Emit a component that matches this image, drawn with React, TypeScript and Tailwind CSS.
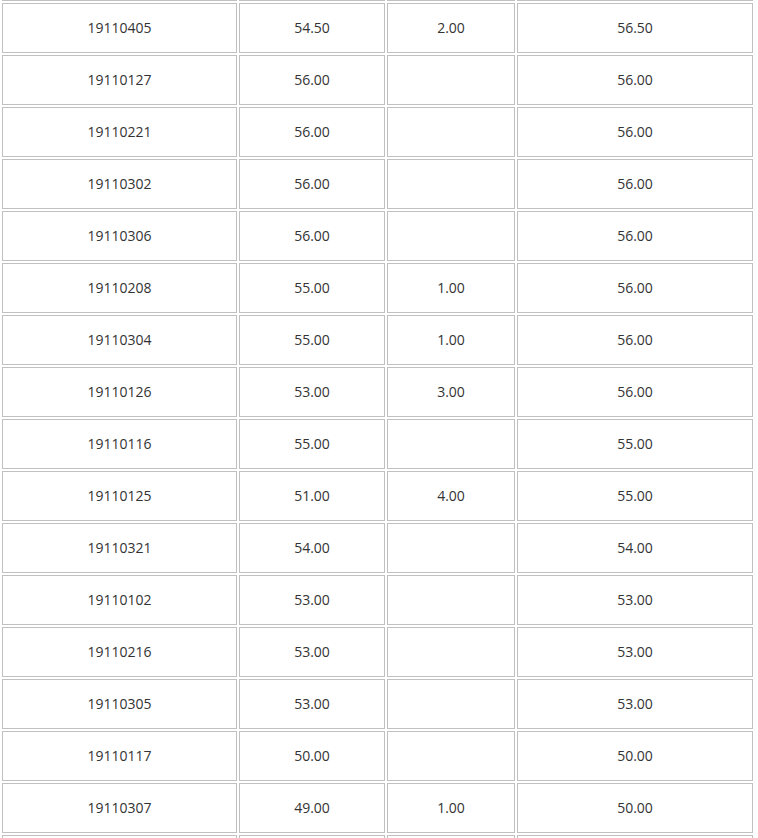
const rows: [string, string, string, string][] = [
  ["", "", "", ""],
  ["19110405", "54.50", "2.00", "56.50"],
  ["19110127", "56.00", "", "56.00"],
  ["19110221", "56.00", "", "56.00"],
  ["19110302", "56.00", "", "56.00"],
  ["19110306", "56.00", "", "56.00"],
  ["19110208", "55.00", "1.00", "56.00"],
  ["19110304", "55.00", "1.00", "56.00"],
  ["19110126", "53.00", "3.00", "56.00"],
  ["19110116", "55.00", "", "55.00"],
  ["19110125", "51.00", "4.00", "55.00"],
  ["19110321", "54.00", "", "54.00"],
  ["19110102", "53.00", "", "53.00"],
  ["19110216", "53.00", "", "53.00"],
  ["19110305", "53.00", "", "53.00"],
  ["19110117", "50.00", "", "50.00"],
  ["19110307", "49.00", "1.00", "50.00"],
  ["", "", "", ""],
];

export default function App() {
  return (
    <div className="h-[838px] w-[758px] overflow-hidden bg-white font-['Open_Sans',sans-serif] text-[14px] text-[#333]">
      <div className="-mt-[49px] grid grid-cols-[235px_146px_128px_236px] gap-[2px] px-[2px]">
        {rows.map((r, i) =>
          r.map((c, j) => (
            <div
              key={`${i}-${j}`}
              className="flex h-[50px] items-center justify-center border border-[#c0c0c0] pb-[2px]"
            >
              {c}
            </div>
          ))
        )}
      </div>
    </div>
  );
}
